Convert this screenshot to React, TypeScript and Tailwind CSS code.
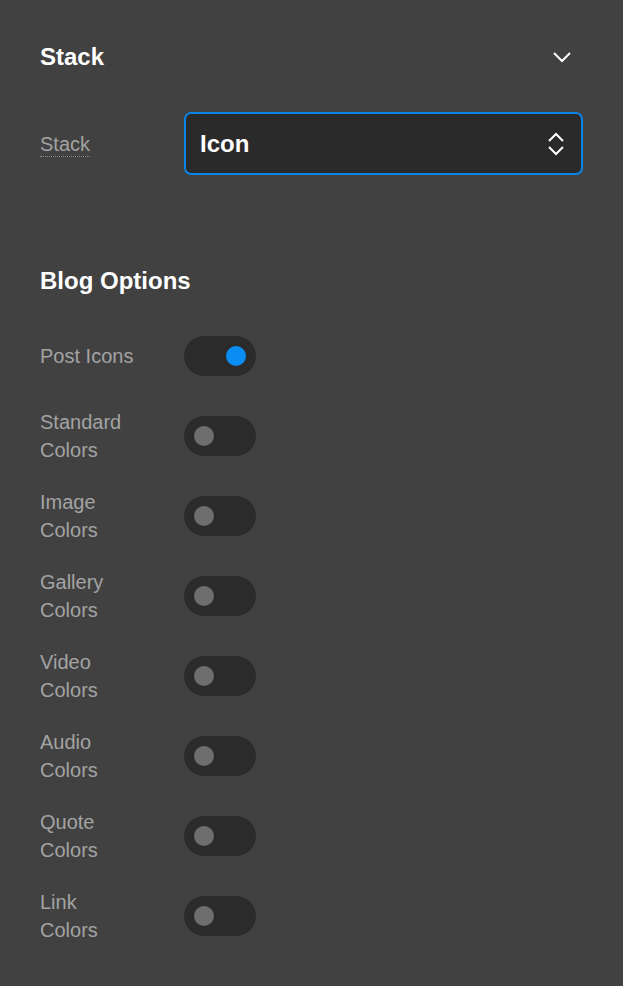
import { useState } from 'react';

const font = { fontFamily: '"Liberation Sans", Arial, sans-serif' };

const blogOptions = [
  { key: 'postIcons', label: 'Post Icons', on: true },
  { key: 'standard', label: 'Standard Colors', on: false },
  { key: 'image', label: 'Image Colors', on: false },
  { key: 'gallery', label: 'Gallery Colors', on: false },
  { key: 'video', label: 'Video Colors', on: false },
  { key: 'audio', label: 'Audio Colors', on: false },
  { key: 'quote', label: 'Quote Colors', on: false },
  { key: 'link', label: 'Link Colors', on: false }
];

function Toggle({ on, onClick }: { on: boolean; onClick: () => void }) {
  return (
    <button
      onClick={onClick}
      className="flex h-[40px] w-[72px] shrink-0 items-center rounded-full bg-[#2b2b2b] px-[10px]"
    >
      <span
        className={
          on
            ? 'ml-auto h-[20px] w-[20px] rounded-full bg-[#0a8ef4]'
            : 'h-[20px] w-[20px] rounded-full bg-[#6e6e6e]'
        }
      />
    </button>
  );
}

export default function App() {
  const [values, setValues] = useState<Record<string, boolean>>(
    Object.fromEntries(blogOptions.map((o) => [o.key, o.on]))
  );

  return (
    <div className="min-h-screen bg-[#414141] pl-[40px] pr-[40px] pt-[41px] pb-[30px]" style={font}>
      {/* Stack section header */}
      <div className="flex h-[32px] items-center justify-between">
        <h2 className="text-[24px] font-bold leading-[32px] text-white">Stack</h2>
        <svg width="20" height="12" viewBox="0 0 20 12" className="mr-[11px]" fill="none">
          <path d="M2 2L10 10L18 2" stroke="#ffffff" strokeWidth="2" />
        </svg>
      </div>

      <div className="mt-[39px] flex items-center">
        <div className="w-[96px] shrink-0 pt-[4px]">
          <span className="inline-block border-b border-dotted border-[#8a8a8a] text-[20px] leading-[23px] text-[#a3a3a3]">
            Stack
          </span>
        </div>
        <div className="ml-[48px] flex h-[63px] flex-1 items-center justify-between rounded-[7px] border-2 border-[#0a84e6] bg-[#2a2a2a] pl-[14px] pr-[16px]">
          <span className="text-[24px] font-bold leading-[28px] text-white">Icon</span>
          <svg width="18" height="24" viewBox="0 0 18 24" fill="none">
            <path d="M2 9L9 2L16 9" stroke="#ffffff" strokeWidth="2" />
            <path d="M2 15L9 22L16 15" stroke="#ffffff" strokeWidth="2" />
          </svg>
        </div>
      </div>

      {/* Blog options */}
      <h2 className="mt-[90px] text-[24px] font-bold leading-[32px] text-white">Blog Options</h2>

      <div className="mt-[19px]">
        {blogOptions.map((o) => (
          <div key={o.key} className="flex h-[80px] items-center">
            <div className="w-[96px] shrink-0 text-[20px] leading-[28px] text-[#a3a3a3]">{o.label}</div>
            <div className="ml-[48px]">
              <Toggle
                on={values[o.key]}
                onClick={() => setValues({ ...values, [o.key]: !values[o.key] })}
              />
            </div>
          </div>
        ))}
      </div>
    </div>
  );
}
